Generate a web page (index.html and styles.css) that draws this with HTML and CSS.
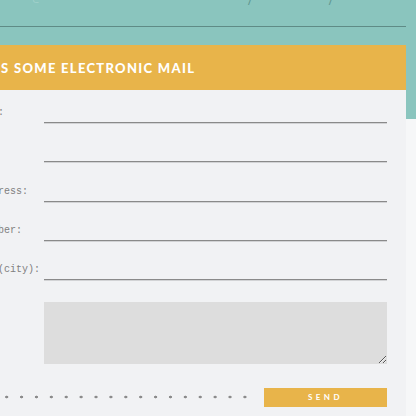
FILE: index.html
```html
<!DOCTYPE html>
<html lang="en">
<head>
<meta charset="utf-8">
<title>Contact</title>
<link rel="stylesheet" href="styles.css">
</head>
<body>
<div class="topbar">
  <nav class="nav">
    <span class="logo">e</span>
    <span class="sep sep-a">/</span>
    <span class="sep sep-b">/</span>
  </nav>
</div>
<section class="card">
  <h2 class="card-title">Drop us some electronic mail</h2>
  <form class="form">
    <label class="label" for="f1">Your name:</label>
    <input class="field" id="f1" type="text">
    <label class="label" for="f2">Email:</label>
    <input class="field" id="f2" type="text">
    <label class="label" for="f3">Email address:</label>
    <input class="field" id="f3" type="text">
    <label class="label" for="f4">Phone number:</label>
    <input class="field" id="f4" type="text">
    <label class="label" for="f5">Location (city):</label>
    <input class="field" id="f5" type="text">
    <span class="label"></span>
    <textarea class="message"></textarea>
    <div class="actions">
      <span class="dots"></span>
      <button class="send" type="button">Send</button>
    </div>
  </form>
</section>
</body>
</html>
```
FILE: styles.css
```css
html, body {
  margin: 0;
  padding: 0;
}
body {
  width: 416px;
  height: 416px;
  overflow: hidden;
  background: linear-gradient(#8ac5be 0, #8ac5be 119px, #f6f7f8 119px);
}
.topbar {
  width: 406px;
  height: 26px;
  border-bottom: 1px solid #5f8b86;
  overflow: hidden;
}
.nav {
  display: flex;
  margin-top: -16px;
  font-family: "Open Sans", sans-serif;
  font-weight: 300;
  font-size: 20px;
  line-height: 28px;
  color: #5f9690;
}
.logo {
  margin-left: 32px;
  font-size: 14px;
  color: #a3d2cc;
}
.sep-a {
  margin-left: 208px;
}
.sep-b {
  margin-left: 74px;
}
.card {
  margin-top: 18px;
  margin-left: -70px;
  width: 476px;
  background: #f1f2f4;
  height: 371px;
}
.card-title {
  margin: 0;
  height: 45px;
  box-sizing: border-box;
  padding-left: 14px;
  background: #e8b44a;
  color: #fff;
  font-family: "Lato", sans-serif;
  font-weight: 900;
  font-size: 13px;
  letter-spacing: 1.3px;
  line-height: 46px;
  text-transform: uppercase;
  white-space: nowrap;
}
.form {
  display: grid;
  grid-template-columns: 100px 343px;
  column-gap: 0;
  row-gap: 17.25px;
  padding: 11px 19px 0 14px;
}
.label {
  font-family: "Liberation Mono", monospace;
  font-size: 10px;
  color: #808080;
  align-self: end;
  padding-bottom: 5px;
  white-space: nowrap;
}
.field {
  height: 22px;
  box-sizing: border-box;
  margin: 0;
  padding: 0;
  border: 0;
  border-bottom: 1px solid #8a8a8a;
  box-shadow: 0 1px 0 #d2d3d5;
  background: transparent;
  outline: none;
}
.message {
  margin: 5px 0 0;
  height: 62px;
  box-sizing: border-box;
  border: 0;
  background: #dddddd;
  resize: vertical;
}
.actions {
  grid-column: 1 / 3;
  display: flex;
  align-items: center;
  margin-top: 6px;
}
.dots {
  width: 309px;
  height: 4px;
  background-image: radial-gradient(circle, #8a8a8a 1.1px, transparent 1.7px);
  background-size: 14.9px 4px;
  background-position: -4.35px 0;
  background-repeat: repeat-x;
}
.send {
  margin-left: auto;
  width: 123px;
  height: 19px;
  border: 0;
  padding: 0;
  background: #e8b44a;
  color: #fff;
  font-family: "Lato", sans-serif;
  font-weight: 700;
  font-size: 8px;
  letter-spacing: 3.5px;
  text-transform: uppercase;
}
```
